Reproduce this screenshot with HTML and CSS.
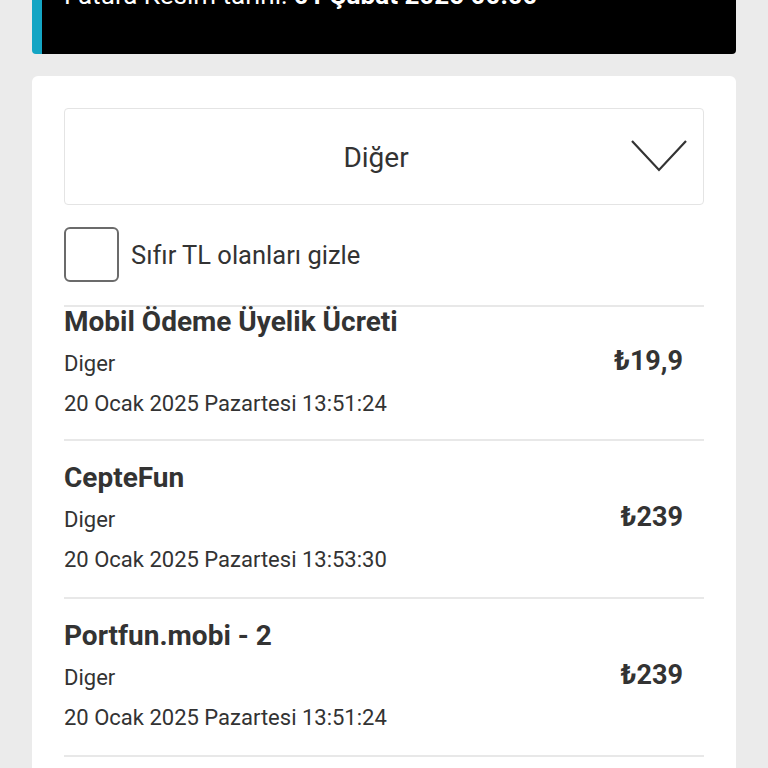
FILE: index.html
```html
<!DOCTYPE html>
<html lang="tr">
<head>
  <meta charset="UTF-8" />
  <meta name="viewport" content="width=device-width, initial-scale=1.0" />
  <title>Fatura Detayı</title>
  <link rel="stylesheet" href="styles.css">
</head>
<body>
  <div class="banner">
    Fatura Kesim tarihi: <b>01 Şubat 2025 00:00</b>
  </div>

  <div class="card">
    <!-- kategori seçimi -->
    <div class="select-box">
      <span></span>
      <span class="select-text">Diğer</span>
      <svg class="chevron" width="56" height="32" viewBox="0 0 56 32">
        <polyline points="1,1 28,30 55,1" fill="none" stroke="#333" stroke-width="2.2" />
      </svg>
    </div>

    <label class="check-row">
      <span class="check"></span>
      <span>Sıfır TL olanları gizle</span>
    </label>

    <ul class="list">
      <li class="item">
        <div class="title">Mobil Ödeme Üyelik Ücreti</div>
        <div class="sub">Diger</div>
        <div class="price">₺19,9</div>
        <div class="sub">20 Ocak 2025 Pazartesi 13:51:24</div>
      </li>
      <li class="item">
        <div class="title">CepteFun</div>
        <div class="sub">Diger</div>
        <div class="price">₺239</div>
        <div class="sub">20 Ocak 2025 Pazartesi 13:53:30</div>
      </li>
      <li class="item">
        <div class="title">Portfun.mobi - 2</div>
        <div class="sub">Diger</div>
        <div class="price">₺239</div>
        <div class="sub">20 Ocak 2025 Pazartesi 13:51:24</div>
      </li>
    </ul>
  </div>
</body>
</html>
```

FILE: styles.css
```css
body {
  margin: 0;
  padding: 0 32px;
  background-color: #ebebeb;
  font-family: Roboto, "Noto Sans", sans-serif;
  color: #333;
}
.banner {
  margin-top: -40px;
  padding: 20px 22px 44px;
  background: #000;
  border-left: 10px solid #14a5c4;
  border-radius: 4px;
  color: white;
  font-size: 26px;
  line-height: 30px;
}
.card {
  margin-top: 22px;
  background: white;
  border-radius: 6px;
  padding: 32px 32px 40px;
}
.select-box {
  display: grid;
  grid-template-columns: 1fr auto 1fr;
  align-items: center;
  height: 95px;
  border: 1px solid #e4e4e4;
  border-radius: 4px;
  padding-right: 16px;
}
.select-text {
  font-size: 28px;
  margin-top: 2px;
}
.chevron {
  justify-self: end;
  margin-top: -2px;
}
.check-row {
  display: flex;
  align-items: center;
  gap: 12px;
  margin-top: 22px;
  font-size: 25.5px;
}
.check {
  width: 51px;
  height: 51px;
  border: 2px solid #6b6b6b;
  border-radius: 6px;
}
.list {
  list-style: none;
  margin: 23px 0 0;
  padding: 0;
}
.item {
  display: grid;
  grid-template-columns: 1fr auto;
  border-top: 2px solid #e8e8e8;
  padding: 22px 0 17px;
}
.item:last-child {
  border-bottom: 2px solid #e8e8e8;
}
.item:first-child {
  padding-top: 0;
  padding-bottom: 15px;
}
.title {
  grid-column: 1 / 3;
  font-size: 28px;
  font-weight: bold;
  line-height: 30px;
  margin-bottom: 7px;
}
.sub {
  font-size: 22px;
  line-height: 40px;
}
.price {
  font-size: 27px;
  font-weight: bold;
  line-height: 34px;
  padding-right: 21px;
}
```
